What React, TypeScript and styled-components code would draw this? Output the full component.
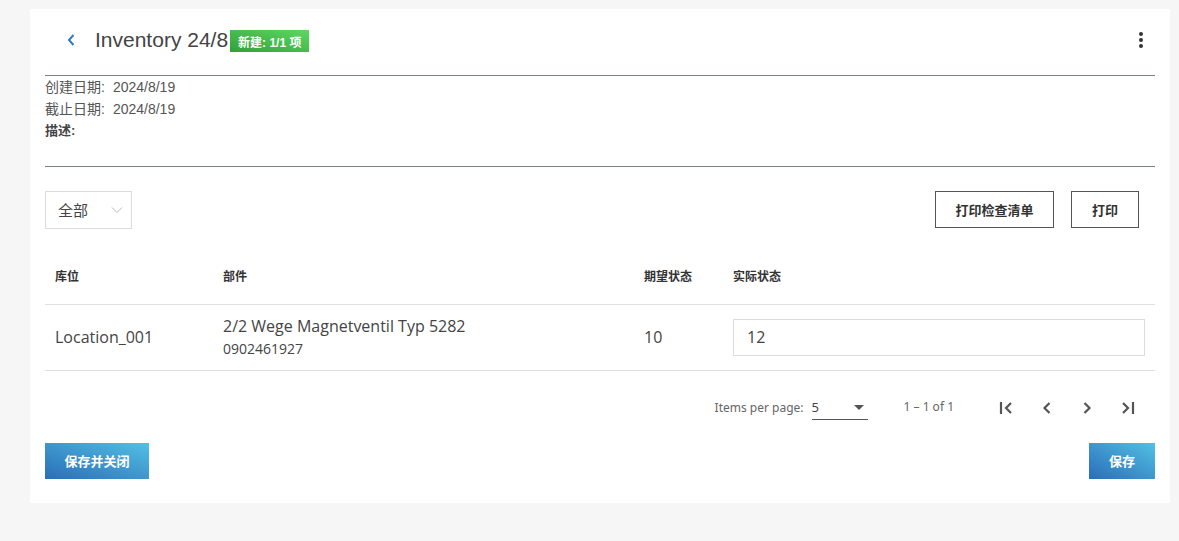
import styled, { createGlobalStyle } from "styled-components";

const GlobalStyle = createGlobalStyle`
  html, body {
    margin: 0;
    padding: 0;
    background: #f6f6f6;
  }
  body {
    font-family: "Open Sans", "Noto Sans", "Noto Sans CJK SC", sans-serif;
    color: #444;
  }
  * {
    box-sizing: border-box;
  }
`;

const Page = styled.div`
  padding: 9px 9px 38px 30px;
`;

const Card = styled.div`
  background: #fff;
  padding: 0 15px 24px;
`;

const Header = styled.div`
  display: flex;
  align-items: center;
  height: 67px;
  padding: 0 12px 4px 18px;
  border-bottom: 1px solid #7a8088;
`;

const BackButton = styled.button`
  display: flex;
  align-items: center;
  justify-content: center;
  width: 16px;
  height: 20px;
  padding: 0;
  border: 0;
  background: none;
  cursor: pointer;
  margin-right: 16px;
`;

const Title = styled.h1`
  margin: 0;
  font-family: "Liberation Sans", "Noto Sans CJK SC", sans-serif;
  font-size: 21px;
  font-weight: 400;
  color: #444;
`;

const Badge = styled.span`
  margin-left: 2px;
  margin-top: 2px;
  height: 22px;
  padding: 0 8px;
  display: inline-flex;
  align-items: center;
  font-family: "Liberation Sans", "Noto Sans CJK SC", sans-serif;
  font-size: 12px;
  font-weight: 700;
  color: #fff;
  background: linear-gradient(to top right, #33a03a, #5cd862);
`;

const Spacer = styled.div`
  flex: 1;
`;

const Kebab = styled.button`
  display: flex;
  flex-direction: column;
  gap: 2px;
  padding: 0;
  border: 0;
  background: none;
  cursor: pointer;
  span {
    width: 4px;
    height: 4px;
    border-radius: 50%;
    background: #333;
  }
`;

const Info = styled.div`
  padding: 1px 0 24px;
  border-bottom: 1px solid #7a8088;
  font-family: "Liberation Sans", "Noto Sans CJK SC", sans-serif;
  font-size: 14px;
  line-height: 21.5px;
  color: #555;
`;

const InfoRow = styled.div<{ $bold?: boolean }>`
  display: flex;
  gap: 8px;
  font-size: ${(p) => (p.$bold ? "13px" : "14px")};
  font-weight: ${(p) => (p.$bold ? 700 : 400)};
  color: ${(p) => (p.$bold ? "#444" : "#555")};
`;

const Toolbar = styled.div`
  display: flex;
  align-items: center;
  margin-top: 24px;
  padding-right: 16px;
`;

const FilterSelect = styled.div`
  display: flex;
  align-items: center;
  justify-content: space-between;
  width: 87px;
  height: 38px;
  padding: 0 8px 0 12px;
  border: 1px solid #dcdcdc;
  font-size: 15px;
  color: #444;
`;

const OutlineButton = styled.button<{ $width: number }>`
  width: ${(p) => p.$width}px;
  height: 37px;
  margin-left: 17px;
  border: 1.5px solid #555;
  background: #fff;
  font-family: "Open Sans", "Noto Sans CJK SC", sans-serif;
  font-size: 13px;
  font-weight: 700;
  color: #333;
  cursor: pointer;
`;

const Table = styled.div`
  margin-top: 19px;
`;

const Row = styled.div<{ $head?: boolean }>`
  display: grid;
  grid-template-columns: 168px 421px 89px 1fr;
  align-items: center;
  height: ${(p) => (p.$head ? "57px" : "66px")};
  border-bottom: 1px solid #e0e0e0;
  font-size: ${(p) => (p.$head ? "12px" : "16px")};
  font-weight: ${(p) => (p.$head ? 700 : 400)};
  color: ${(p) => (p.$head ? "#333" : "#444")};
`;

const Cell = styled.div`
  padding: 0 10px;
`;

const PartName = styled.div`
  font-size: 16px;
  line-height: 23px;
`;

const PartCode = styled.div`
  font-size: 14px;
  line-height: 22px;
`;

const Input = styled.input`
  width: 100%;
  height: 37px;
  padding: 0 13px;
  border: 1px solid #dcdcdc;
  font-family: "Open Sans", sans-serif;
  font-size: 16px;
  color: #444;
  outline: none;
`;

const Paginator = styled.div`
  display: flex;
  align-items: center;
  justify-content: flex-end;
  height: 56px;
  margin-top: 9px;
  padding-right: 8px;
  font-family: "Noto Sans", sans-serif;
  font-size: 12px;
  color: #666;
`;

const PageSize = styled.div`
  display: flex;
  align-items: center;
  justify-content: space-between;
  width: 56px;
  height: 24px;
  margin-left: 8px;
  padding-right: 4px;
  border-bottom: 1px solid #555;
  font-size: 13px;
  color: #444;
`;

const Triangle = styled.span`
  width: 0;
  height: 0;
  border-left: 5px solid transparent;
  border-right: 5px solid transparent;
  border-top: 5px solid #555;
`;

const RangeLabel = styled.span`
  margin: -2px 33px 0 36px;
`;

const PageButton = styled.button`
  display: flex;
  align-items: center;
  justify-content: center;
  width: 40px;
  height: 40px;
  padding: 0;
  border: 0;
  background: none;
  cursor: pointer;
`;

const Footer = styled.div`
  display: flex;
  justify-content: space-between;
  margin-top: 7px;
`;

const PrimaryButton = styled.button<{ $width: number }>`
  width: ${(p) => p.$width}px;
  height: 36px;
  border: 0;
  background: linear-gradient(to top right, #2a6db7, #52c0e4);
  font-family: "Open Sans", "Noto Sans CJK SC", sans-serif;
  font-size: 13px;
  font-weight: 700;
  color: #fff;
  cursor: pointer;
`;

const PageIcon = ({ d, bar }: { d: string; bar?: number }) => (
  <svg width="20" height="20" viewBox="0 0 20 20" fill="none" stroke="#555" strokeWidth="2.2">
    {bar !== undefined && <line x1={bar} y1="4" x2={bar} y2="16" />}
    <path d={d} strokeLinejoin="miter" />
  </svg>
);

export default function App() {
  return (
    <>
      <GlobalStyle />
      <Page>
        <Card>
          <Header>
            <BackButton aria-label="back">
              <svg width="10" height="14" viewBox="0 0 10 14" fill="none" stroke="#2f7bc4" strokeWidth="2">
                <path d="M7.5 2 L3 7 L7.5 12" />
              </svg>
            </BackButton>
            <Title>Inventory 24/8</Title>
            <Badge>新建: 1/1 项</Badge>
            <Spacer />
            <Kebab aria-label="menu">
              <span />
              <span />
              <span />
            </Kebab>
          </Header>

          <Info>
            <InfoRow>
              <span>创建日期:</span>
              <span>2024/8/19</span>
            </InfoRow>
            <InfoRow>
              <span>截止日期:</span>
              <span>2024/8/19</span>
            </InfoRow>
            <InfoRow $bold>
              <span>描述:</span>
            </InfoRow>
          </Info>

          <Toolbar>
            <FilterSelect>
              <span>全部</span>
              <svg width="12" height="8" viewBox="0 0 12 8" fill="none" stroke="#bbb" strokeWidth="1">
                <path d="M1 1.5 L6 6.5 L11 1.5" />
              </svg>
            </FilterSelect>
            <Spacer />
            <OutlineButton $width={119}>打印检查清单</OutlineButton>
            <OutlineButton $width={68}>打印</OutlineButton>
          </Toolbar>

          <Table>
            <Row $head>
              <Cell>库位</Cell>
              <Cell>部件</Cell>
              <Cell>期望状态</Cell>
              <Cell>实际状态</Cell>
            </Row>
            <Row>
              <Cell>Location_001</Cell>
              <Cell>
                <PartName>2/2 Wege Magnetventil Typ 5282</PartName>
                <PartCode>0902461927</PartCode>
              </Cell>
              <Cell>10</Cell>
              <Cell>
                <Input defaultValue="12" />
              </Cell>
            </Row>
          </Table>

          <Paginator>
            <span>Items per page:</span>
            <PageSize>
              <span>5</span>
              <Triangle />
            </PageSize>
            <RangeLabel>1 – 1 of 1</RangeLabel>
            <PageButton aria-label="first page">
              <PageIcon bar={4} d="M14 5 L9 10 L14 15" />
            </PageButton>
            <PageButton aria-label="previous page">
              <PageIcon d="M12.5 5 L7.5 10 L12.5 15" />
            </PageButton>
            <PageButton aria-label="next page">
              <PageIcon d="M7.5 5 L12.5 10 L7.5 15" />
            </PageButton>
            <PageButton aria-label="last page">
              <PageIcon bar={16} d="M6 5 L11 10 L6 15" />
            </PageButton>
          </Paginator>

          <Footer>
            <PrimaryButton $width={104}>保存并关闭</PrimaryButton>
            <PrimaryButton $width={66}>保存</PrimaryButton>
          </Footer>
        </Card>
      </Page>
    </>
  );
}
